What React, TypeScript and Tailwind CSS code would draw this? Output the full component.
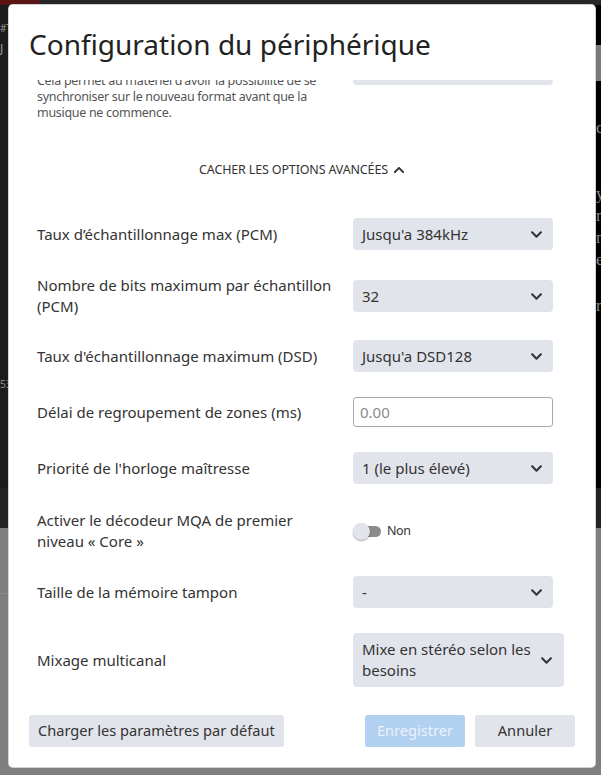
import React from "react";
import { FaChevronDown, FaChevronUp } from "react-icons/fa";

function Select({ children, wide = false }: { children: React.ReactNode; wide?: boolean }) {
  return (
    <div
      className={
        wide
          ? "flex w-[211px] items-center justify-between rounded-[4px] bg-[#e2e4eb] py-[6px] pl-[9px] pr-[11px] text-[15px] leading-[21px] text-[#333]"
          : "flex h-[32px] w-[200px] items-center justify-between rounded-[4px] bg-[#e2e4eb] pl-[9px] pr-[10px] text-[15px] text-[#333]"
      }
    >
      <span>{children}</span>
      <FaChevronDown size={13} className="shrink-0 text-[#333]" />
    </div>
  );
}

function Row({ label, children, pad = "py-3" }: { label: React.ReactNode; children: React.ReactNode; pad?: string }) {
  return (
    <div className={"flex items-center " + pad}>
      <div className="w-[316px] shrink-0 pr-4 text-[15px] leading-[21px] text-[#333]">{label}</div>
      {children}
    </div>
  );
}

function Btn({ children, className }: { children: React.ReactNode; className: string }) {
  return (
    <div className={"flex h-[32px] items-center justify-center rounded-[3px] text-[14.6px] " + className}>{children}</div>
  );
}

export default function App() {
  return (
    <div className="relative h-[775px] w-[601px] overflow-hidden bg-black font-['Noto_Sans',sans-serif]">
      {/* backdrop */}
      <div className="absolute left-0 top-0 h-[5px] w-[601px] bg-[#262626]" />
      <div className="absolute left-0 top-0 h-[6px] w-[40px] bg-[#5a1414]" />
      <div className="absolute left-0 top-[5px] h-[483px] w-[9px] bg-[#1c1c1a]" />
      <div className="absolute left-0 top-[488px] h-[40px] w-[601px] bg-[#232323]" />
      <div className="absolute left-0 top-[528px] h-[247px] w-[601px] bg-[#7f7f7f]" />
      <div className="absolute left-0 top-[593px] h-px w-[9px] bg-[#8c8c8c]" />
      <div className="absolute left-[595px] top-[45px] h-[36px] w-[6px] bg-[#7a7a7a]" />
      <div className="absolute left-0 top-[22px] text-[10px] leading-[12px] text-[#9a9a9a]">#T</div>
      <div className="absolute left-0 top-[42px] text-[12px] leading-[14px] text-[#9a9a9a]">J</div>
      <div className="absolute left-0 top-[378px] text-[10px] leading-[12px] text-[#8a8a8a]">53</div>
      <div className="absolute left-[596px] top-[118px] font-['Liberation_Serif',serif] text-[17px] leading-[20px] text-[#8a8a8a]">
        c
      </div>
      <div className="absolute left-[596px] top-[183px] flex flex-col font-['Liberation_Serif',serif] text-[17px] leading-[22px] text-[#8a8a8a]">
        <span>y</span>
        <span>r</span>
        <span>n</span>
        <span>e</span>
      </div>
      <div className="absolute left-[596px] top-[296px] font-['Liberation_Serif',serif] text-[17px] leading-[20px] text-[#8a8a8a]">
        r
      </div>

      {/* modal */}
      <div className="absolute left-[9px] top-[5px] flex h-[762px] w-[586px] flex-col overflow-hidden rounded-[4px] bg-white shadow-[0_0_0_1px_#cfd3da]">
        <div className="relative z-10 flex h-[75px] shrink-0 items-center bg-white pl-[20px] pt-[3px]">
          <h1 className="text-[28px] font-normal leading-none text-[#222]">Configuration du périphérique</h1>
        </div>

        <div className="flex-1 overflow-hidden pl-[28px]">
          <div className="-mt-[27px] flex items-start">
            <p className="w-[316px] shrink-0 whitespace-nowrap pt-[20px] text-[12.5px] leading-[16px] tracking-[-0.3px] text-[#555]">
              Cela permet au matériel d'avoir la possibilité de se
              <br />
              synchroniser sur le nouveau format avant que la
              <br />
              musique ne commence.
            </p>
            <div className="h-[32px] w-[200px] rounded-[4px] bg-[#e2e4eb]" />
          </div>

          <div className="mt-[41px] flex items-center justify-center gap-[5px] pr-[28px] text-[12.5px] leading-[16px] tracking-[-0.15px] text-[#333]">
            <span>CACHER LES OPTIONS AVANCÉES</span>
            <FaChevronUp size={12} className="text-[#333]" />
          </div>

          <div className="mt-[28px] flex flex-col">
            <Row label="Taux d’échantillonnage max (PCM)">
              <Select>Jusqu'a 384kHz</Select>
            </Row>
            <Row
              pad="pt-[13px] pb-[12px]"
              label={
                <>
                  Nombre de bits maximum par échantillon
                  <br />
                  (PCM)
                </>
              }
            >
              <Select>32</Select>
            </Row>
            <Row pad="pt-[11px] pb-[12px]" label="Taux d'échantillonnage maximum (DSD)">
              <Select>Jusqu'a DSD128</Select>
            </Row>
            <Row label="Délai de regroupement de zones (ms)">
              <div className="flex h-[32px] items-center">
                <div className="flex h-[30px] w-[200px] items-center rounded-[3px] border border-[#a8a8a8] px-[6px] text-[15px] text-[#8a8a8a]">
                  0.00
                </div>
              </div>
            </Row>
            <Row pad="pt-[12px] pb-[13px]" label="Priorité de l'horloge maîtresse">
              <Select>1 (le plus élevé)</Select>
            </Row>
            <Row
              pad="pt-[13px] pb-[12px]"
              label={
                <>
                  Activer le décodeur MQA de premier
                  <br />
                  niveau « Core »
                </>
              }
            >
              <div className="flex items-center gap-[6px]">
                <div className="relative h-[17px] w-[28px]">
                  <div className="absolute left-[4px] top-[3px] h-[11px] w-[24px] rounded-full bg-[#8c8c8c]" />
                  <div className="absolute left-0 top-0 h-[17px] w-[17px] rounded-full bg-[#e2e4eb] shadow-[0_1px_2px_rgba(0,0,0,0.35)]" />
                </div>
                <span className="text-[12.5px] tracking-[-0.4px] text-[#333]">Non</span>
              </div>
            </Row>
            <Row label="Taille de la mémoire tampon">
              <Select>-</Select>
            </Row>
            <Row pad="pt-[13px] pb-[12px]" label="Mixage multicanal">
              <Select wide>
                Mixe en stéréo selon les
                <br />
                besoins
              </Select>
            </Row>
          </div>
        </div>

        <div className="flex shrink-0 items-center justify-between px-[20px] pb-[20px] pt-[12px]">
          <Btn className="bg-[#e2e4eb] px-[9px] text-[#333]">Charger les paramètres par défaut</Btn>
          <div className="flex gap-[10px]">
            <Btn className="w-[100px] bg-[#b2d0f0] text-[#eaf2fc]">Enregistrer</Btn>
            <Btn className="w-[100px] bg-[#e2e4eb] text-[#333]">Annuler</Btn>
          </div>
        </div>
      </div>
    </div>
  );
}
